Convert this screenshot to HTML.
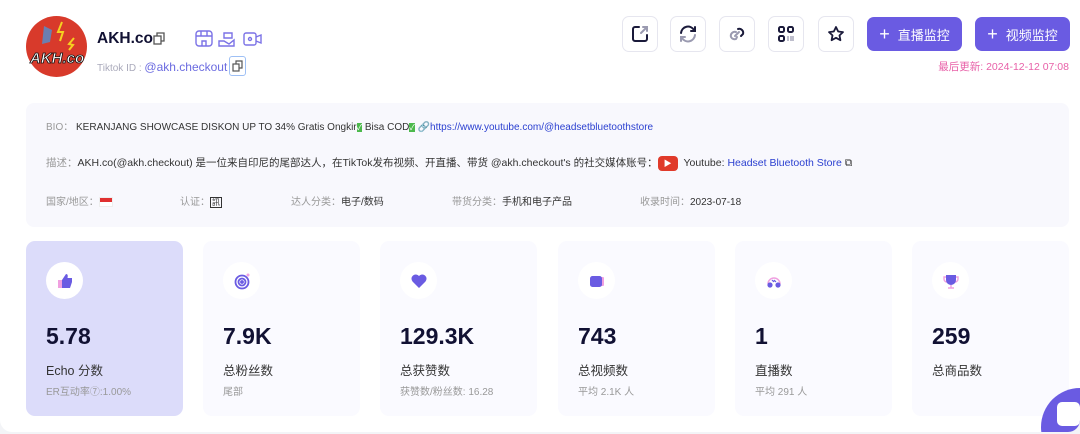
<!DOCTYPE html>
<html style="overflow:hidden"><head><meta charset="utf-8"><style>
*{margin:0;padding:0;box-sizing:border-box}
html,body{width:1080px;height:434px;overflow:hidden}
body{background:#f3f4f7;font-family:"Liberation Sans","Noto Sans CJK SC",sans-serif;position:relative}
.main{position:absolute;left:0;top:0;width:1080px;height:432px;background:#fff;border-radius:0 0 12px 12px;overflow:hidden}
.abs{position:absolute}
.ib{position:absolute;top:16px;width:36px;height:36px;border:1px solid #e6e6ef;border-radius:7px;background:#fff;display:flex;align-items:center;justify-content:center}
.pb{position:absolute;top:17px;height:34px;width:95px;background:#6a5be2;border-radius:7px;color:#fff;font-size:13px;display:flex;align-items:center;justify-content:center;gap:8px}
.info{position:absolute;left:26px;top:103px;width:1043px;height:124px;background:#f8f8fd;border-radius:8px;font-size:10px;color:#333}
.info .l{color:#999}
.card{position:absolute;top:241px;width:157px;height:175px;background:#fafaff;border-radius:9px}
.card .ic{position:absolute;left:20px;top:21px;width:37px;height:37px;border-radius:50%;background:#fff;display:flex;align-items:center;justify-content:center}
.card .n{position:absolute;left:20px;top:82px;font-size:23px;font-weight:bold;color:#111133}
.card .t{position:absolute;left:20px;top:119px;font-size:12.5px;color:#333}
.card .s{position:absolute;left:20px;top:142px;font-size:10px;color:#999}
a{color:#2a3fd0;text-decoration:none}
</style></head><body>
<div class="main">
<svg class="abs" style="left:26px;top:16px" width="61" height="61" viewBox="0 0 61 61"><circle cx="30.5" cy="30.5" r="30.5" fill="#d83a2b"/><path d="M18 10l8 4-2 12-8 2z" fill="#6b7fb0"/><path d="M36 6l-4 10 5 0-3 9" stroke="#f5d020" stroke-width="2" fill="none"/><path d="M48 22l-5 6 4 1-4 5" stroke="#f5d020" stroke-width="2" fill="none"/><text x="4" y="47" font-size="15" font-weight="bold" font-style="italic" fill="#fff" stroke="#111" stroke-width="0.8" font-family="Liberation Sans">AKH.co</text></svg>
<div class="abs" style="left:97px;top:30px;font-size:15.5px;font-weight:bold;color:#111133">AKH.co</div>
<svg class="abs" style="left:153px;top:32px" width="12" height="13" viewBox="0 0 12 13"><rect x="1" y="4" width="7" height="8" fill="none" stroke="#555" stroke-width="1.3"/><path d="M4 4V1h7v8H8" fill="none" stroke="#555" stroke-width="1.3"/></svg>
<svg class="abs" style="left:194px;top:29px" width="72" height="20" viewBox="0 0 72 20" fill="none" stroke="#7b72e6" stroke-width="1.4"><rect x="2" y="2" width="16" height="15" rx="3"/><path d="M2 7h16M7 2v5M13 2v5M8 17v-5h4v5"/><path d="M30 9h8v-5h-8zM25 12h5l5 3 5-4v6H25z"/><rect x="50" y="4" width="12" height="12" rx="2"/><path d="M62 8l5-2v8l-5-2"/><circle cx="56" cy="10" r="1.5"/></svg>
<div class="abs" style="left:97px;top:60px;font-size:10px;color:#aab;white-space:nowrap"><span>Tiktok ID : </span><span style="color:#6b6be0;font-size:12px">@akh.checkout</span></div>
<div class="abs" style="left:229px;top:56px;width:17px;height:20px;border:1px solid #9ec0f5;border-radius:3px"></div>
<svg class="abs" style="left:232px;top:60px" width="12" height="12" viewBox="0 0 12 12"><rect x="1" y="4" width="6" height="7" fill="none" stroke="#555" stroke-width="1.2"/><path d="M4 4V1h6v7H7" fill="none" stroke="#555" stroke-width="1.2"/></svg>

<div class="ib" style="left:622px"><svg width="20" height="20" viewBox="0 0 20 20" fill="none" stroke="#1a1a3a" stroke-width="2" stroke-linecap="round"><path d="M9 3H5a2 2 0 0 0-2 2v10a2 2 0 0 0 2 2h10a2 2 0 0 0 2-2v-4"/><path d="M11 9l6-6M13 3h4v4" stroke="#9a9ab0"/></svg></div>
<div class="ib" style="left:670px"><svg width="20" height="20" viewBox="0 0 20 20" fill="none" stroke-width="2" stroke-linecap="round"><path d="M3 9a7 7 0 0 1 13-3M17 3v4h-4" stroke="#1a1a3a"/><path d="M17 11a7 7 0 0 1-13 3M3 17v-4h4" stroke="#9a9ab0"/></svg></div>
<div class="ib" style="left:719px"><svg width="20" height="20" viewBox="0 0 20 20" fill="none" stroke-width="2" stroke-linecap="round"><path d="M11 5a4 4 0 0 1 5 5l-2 2" stroke="#1a1a3a"/><path d="M9 8a4 4 0 0 0-5 5 4 4 0 0 0 5 2l1-2M8 12l4-4" stroke="#9a9ab0"/></svg></div>
<div class="ib" style="left:768px"><svg width="20" height="20" viewBox="0 0 20 20" fill="none" stroke="#1a1a3a" stroke-width="2"><rect x="3" y="3" width="5" height="5" rx="1.5"/><rect x="12" y="3" width="5" height="5" rx="1.5"/><rect x="3" y="12" width="5" height="5" rx="1.5"/><path d="M12 12v5M15 12v5M17 12v5" stroke="#9a9ab0" stroke-width="1.3"/></svg></div>
<div class="ib" style="left:818px"><svg width="20" height="20" viewBox="0 0 20 20" fill="none" stroke="#1a1a3a" stroke-width="1.8" stroke-linejoin="round"><path d="M10 3l2.2 4.5 4.8.6-3.5 3.3.9 4.8-4.4-2.4-4.4 2.4.9-4.8L3 8.1l4.8-.6z"/></svg></div>
<div class="pb" style="left:867px"><span style="font-size:18px;font-weight:300">+</span>直播监控</div>
<div class="pb" style="left:975px"><span style="font-size:18px;font-weight:300">+</span>视频监控</div>
<div class="abs" style="right:11px;top:59px;font-size:10.5px;color:#e860a8">最后更新: 2024-12-12 07:08</div>

<div class="info">
<div class="abs" style="left:20px;top:15px;white-space:nowrap"><span class="l">BIO：</span> KERANJANG SHOWCASE DISKON UP TO 34% Gratis Ongkir<span style="background:#4cb94c;color:#fff;font-size:8px">✓</span> Bisa COD<span style="background:#4cb94c;color:#fff;font-size:8px">✓</span> 🔗<a>https://www.youtube.com/@headsetbluetoothstore</a></div>
<div class="abs" style="left:20px;top:52px;white-space:nowrap;font-size:10.5px"><span class="l">描述：</span>AKH.co(@akh.checkout) 是一位来自印尼的尾部达人，在TikTok发布视频、开直播、带货 @akh.checkout's 的社交媒体账号：<span style="display:inline-block;width:20px;height:15px;background:#e03a2a;border-radius:4px;vertical-align:middle;color:#fff;font-size:8px;text-align:center;line-height:15px">▶</span>&nbsp; Youtube: <a>Headset Bluetooth Store</a> ⧉</div>
<div class="abs" style="left:20px;top:90px"><span class="l">国家/地区：</span><span style="display:inline-block;width:14px;height:10px;background:linear-gradient(#e03030 50%,#fff 50%);vertical-align:middle;border:1px solid #eee"></span></div>
<div class="abs" style="left:154px;top:90px"><span class="l">认证：</span><span style="border:1px solid #333;font-size:8px;padding:0 1px">訊</span></div>
<div class="abs" style="left:265px;top:90px"><span class="l">达人分类：</span>电子/数码</div>
<div class="abs" style="left:426px;top:90px"><span class="l">带货分类：</span>手机和电子产品</div>
<div class="abs" style="left:614px;top:90px"><span class="l">收录时间：</span>2023-07-18</div>
</div>

<div class="card" style="left:26px;background:#dcdcfa"><div class="ic"><svg width="18" height="18" viewBox="0 0 18 18"><rect x="2" y="8" width="5" height="8" fill="#f0a0e0"/><path d="M6 8l4-6c2 0 2 2 1.5 4H16v4l-2 6H6z" fill="#6a5be2"/></svg></div><div class="n">5.78</div><div class="t">Echo 分数</div><div class="s">ER互动率⑦:1.00%</div></div>
<div class="card" style="left:203px"><div class="ic"><svg width="18" height="18" viewBox="0 0 18 18" fill="none" stroke="#6a5be2" stroke-width="1.8"><circle cx="9" cy="10" r="6.5"/><circle cx="9" cy="10" r="3.5"/><circle cx="9" cy="10" r="1" fill="#6a5be2"/><circle cx="15" cy="3" r="1.5" fill="#f0a0e0" stroke="none"/></svg></div><div class="n">7.9K</div><div class="t">总粉丝数</div><div class="s">尾部</div></div>
<div class="card" style="left:380px"><div class="ic"><svg width="18" height="18" viewBox="0 0 18 18"><path d="M9 16L2.5 9.5A4 4 0 0 1 9 4a4 4 0 0 1 6.5 5.5z" fill="#6a5be2"/></svg></div><div class="n">129.3K</div><div class="t">总获赞数</div><div class="s">获赞数/粉丝数: 16.28</div></div>
<div class="card" style="left:558px"><div class="ic"><svg width="18" height="18" viewBox="0 0 18 18"><rect x="12" y="5" width="4" height="9" rx="1" fill="#f0a0e0"/><rect x="2" y="4" width="12" height="11" rx="2.5" fill="#6a5be2"/></svg></div><div class="n">743</div><div class="t">总视频数</div><div class="s">平均 2.1K 人</div></div>
<div class="card" style="left:735px"><div class="ic"><svg width="18" height="18" viewBox="0 0 18 18"><path d="M3 12a6 6 0 0 1 12 0" fill="none" stroke="#f0a0e0" stroke-width="1.5"/><path d="M7 8l1.5 1.5 1-1L11 10" stroke="#6a5be2" fill="none" stroke-width="1.2"/><circle cx="5" cy="13" r="2.6" fill="#6a5be2"/><circle cx="13" cy="13" r="2.6" fill="#6a5be2"/></svg></div><div class="n">1</div><div class="t">直播数</div><div class="s">平均 291 人</div></div>
<div class="card" style="left:912px"><div class="ic"><svg width="18" height="18" viewBox="0 0 18 18"><path d="M4 5H2v2a3 3 0 0 0 3 3M14 5h2v2a3 3 0 0 1-3 3M9 13v3M6 16h6" stroke="#f0a0e0" stroke-width="1.4" fill="none"/><path d="M4 3h10v5a5 5 0 0 1-10 0z" fill="#6a5be2"/></svg></div><div class="n">259</div><div class="t">总商品数</div></div>

<svg class="abs" style="left:1040px;top:386px" width="40" height="46" viewBox="0 0 40 46"><circle cx="40" cy="41" r="39" fill="#6a5be2"/><rect x="17" y="16" width="23" height="24" rx="5" fill="#fff"/></svg>
</div>
</body></html>
